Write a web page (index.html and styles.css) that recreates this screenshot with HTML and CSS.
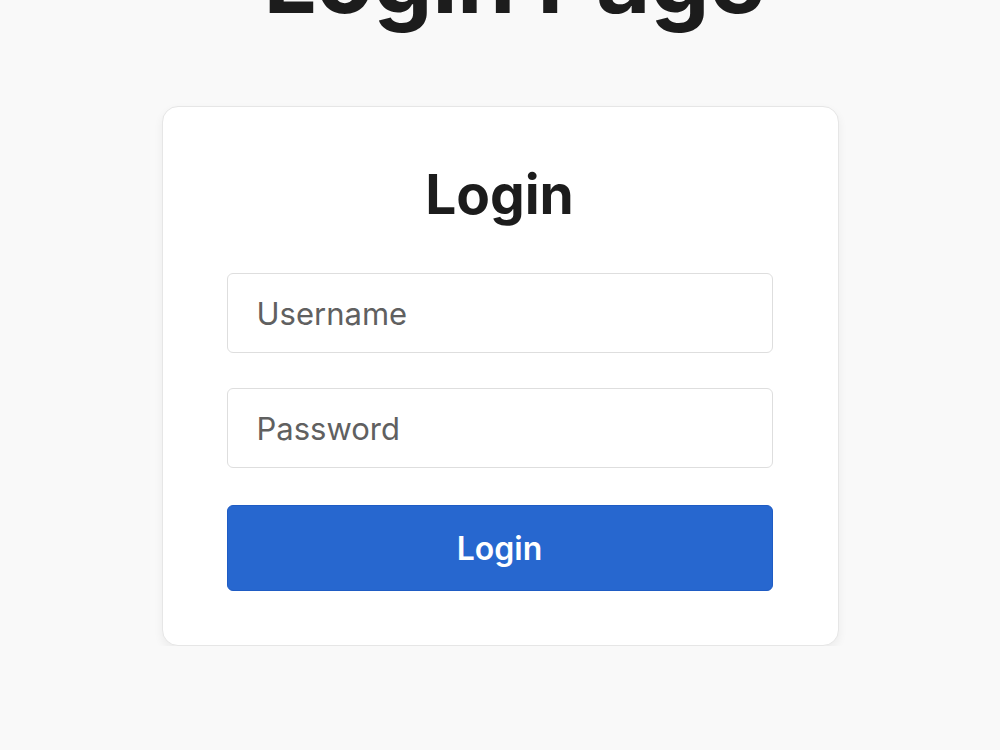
FILE: index.html
```html
<!DOCTYPE html>
<html lang="en">
<head>
  <meta charset="UTF-8">
  <meta name="viewport" content="width=device-width, initial-scale=1.0">
  <title>Login Page</title>
  <link rel="stylesheet" href="styles.css">
</head>
<body>
  <h1 class="page-title">Login Page</h1>

  <!-- Login card -->
  <div class="login-card">
    <h2>Login</h2>
    <form id="loginForm" class="login-form">
      <input type="text" name="username" placeholder="Username" required />
      <input type="password" name="password" placeholder="Password" required />
      <button type="submit">Login</button>
    </form>
  </div>
</body>
</html>
```

FILE: styles.css
```css
body {
  font-family: Inter, "Noto Sans", Arial, sans-serif;
  background-color: #f9f9f9;
  margin: 0;
  padding: 0;
  color: #1c1c1c;
}
.page-title {
  text-align: center;
  font-size: 94px;
  font-weight: 700;
  line-height: 1;
  margin: -68px 0 0;
  padding-left: 28px;
  letter-spacing: -0.5px;
}
.login-card {
  width: 677px;
  box-sizing: border-box;
  margin: 80px auto 0;
  background-color: #ffffff;
  border: 1px solid #e6e6e6;
  border-radius: 16px;
  padding: 60px 65px 54px 64px;
  box-shadow: 0 4px 10px rgba(0, 0, 0, 0.06);
}
.login-card h2 {
  text-align: center;
  font-size: 55px;
  font-weight: 700;
  line-height: 1;
  margin: 0 0 51px;
}
.login-form {
  display: flex;
  flex-direction: column;
  gap: 35px;
}
input {
  height: 80px;
  padding: 0 29px;
  box-sizing: border-box;
  border: 1px solid #dedede;
  border-radius: 6px;
  font-family: inherit;
  font-size: 31px;
  color: #333;
}
input::placeholder {
  color: #606060;
}
button {
  margin-top: 2px;
  height: 86px;
  background-color: #2767cf;
  color: white;
  border: 1px solid #1f5cc4;
  border-radius: 6px;
  font-family: inherit;
  font-size: 32px;
  font-weight: 600;
  cursor: pointer;
}
button:hover {
  background-color: #1f58b8;
}
```
